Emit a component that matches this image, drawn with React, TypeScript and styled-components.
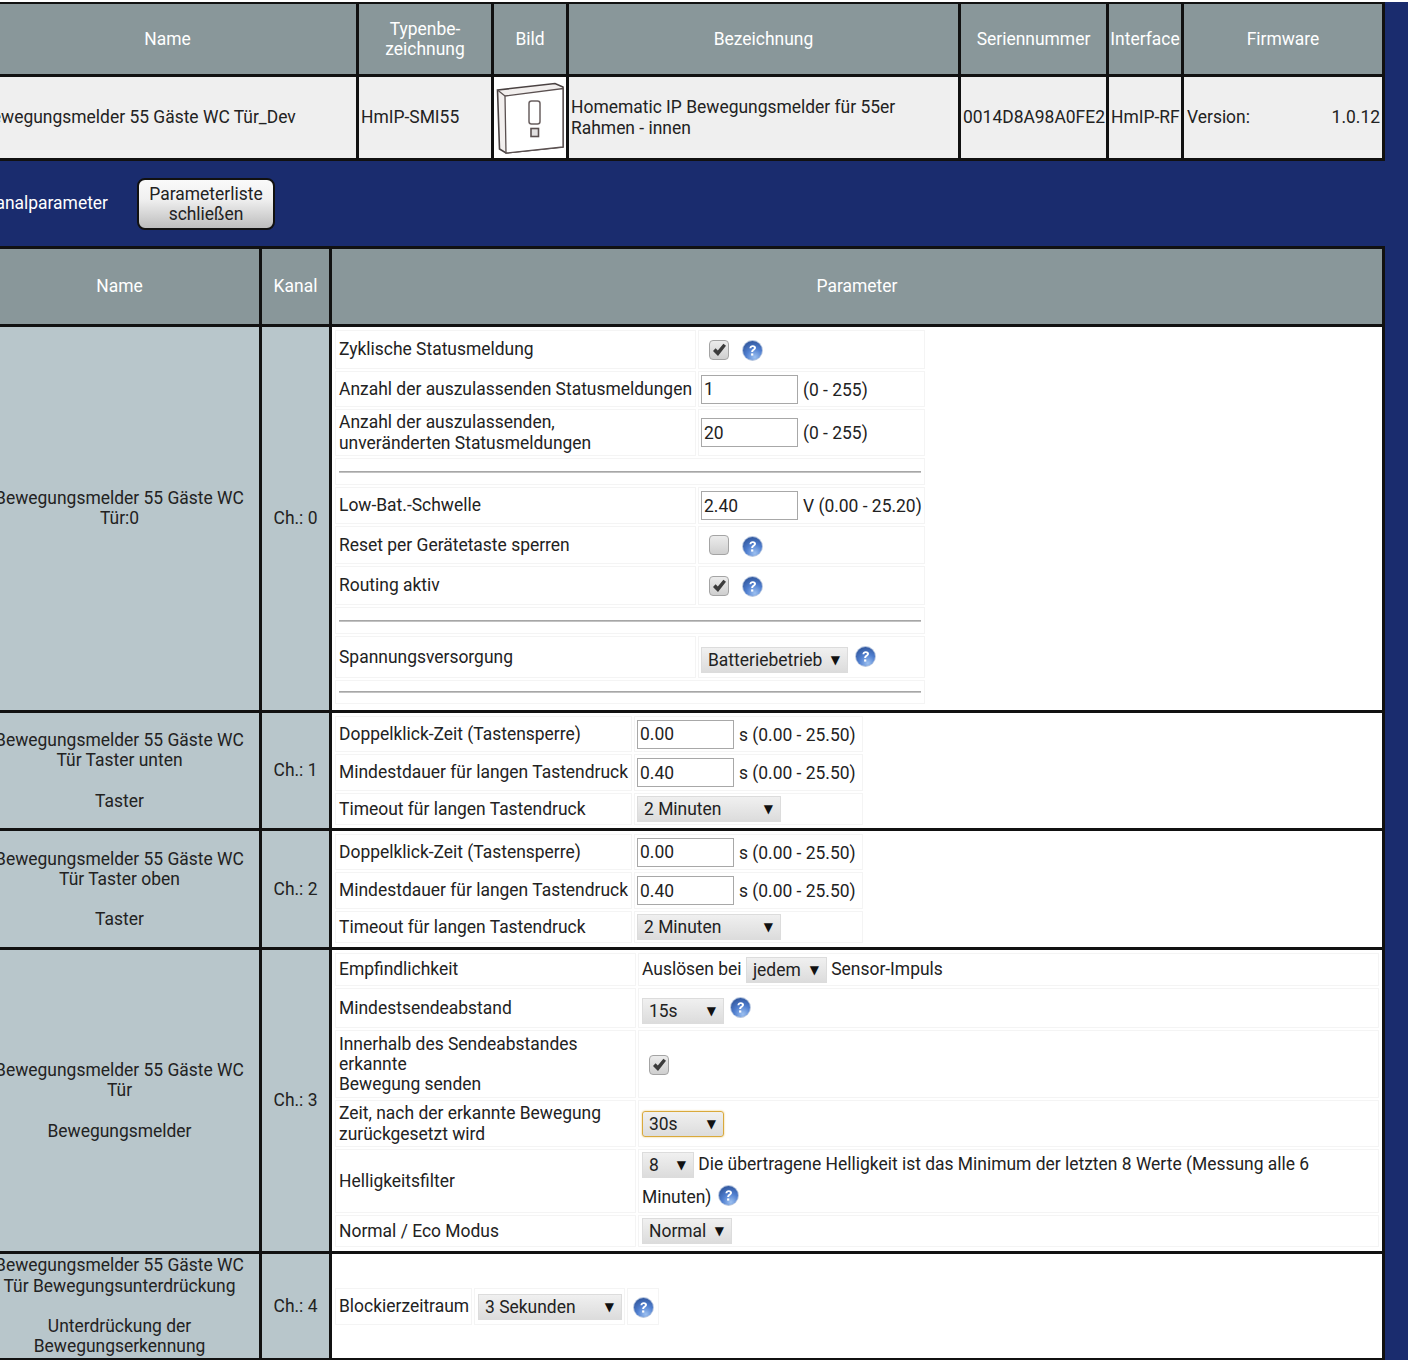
import React from 'react';
import styled, { createGlobalStyle } from 'styled-components';

const GlobalStyle = createGlobalStyle`
  html, body {
    margin: 0;
    padding: 0;
    background: #fff;
  }
  body {
    font-family: Roboto, "Liberation Sans", sans-serif;
    font-size: 17.45px;
    line-height: 20.25px;
    color: #222;
  }
`;

const Page = styled.div`
  width: 1408px;
  height: 1358px;
  margin-top: 2px;
  background-color: #1a2c6e;
  overflow: hidden;
`;

const Content = styled.div`
  width: 1409px;
  margin: -1px 0 0 -24px;
`;

const OuterTable = styled.table<{ $indent?: number }>`
  border-collapse: separate;
  border-spacing: 3px;
  background-color: #111;
  table-layout: fixed;
  width: ${p => 1409 - (p.$indent ?? 0)}px;
  margin-left: ${p => p.$indent ?? 0}px;
`;

const HeadCell = styled.th<{ $h: number }>`
  background-color: #89979a;
  color: #fff;
  font-weight: 400;
  text-align: center;
  padding: 0;
  height: ${p => p.$h}px;
`;

const DeviceCell = styled.td`
  background-color: #efefef;
  padding: 0 2px;
  height: 81px;
  white-space: nowrap;
`;

const ImageCell = styled.td`
  background-color: #fff;
  padding: 0;
  vertical-align: middle;
`;

const DescText = styled.div`
  white-space: normal;
`;

const VersionRow = styled.div`
  display: flex;
  justify-content: space-between;
  padding-left: 1px;
`;

const ActionBar = styled.div`
  display: flex;
  align-items: center;
  height: 85px;
  padding-left: 7px;
  gap: 29px;
`;

const ActionLabel = styled.span`
  color: #fff;
  width: 125px;
  text-align: right;
`;

const CloseButton = styled.button`
  width: 138px;
  height: 52px;
  padding: 0;
  border: 2px solid #111;
  border-radius: 8px;
  background: linear-gradient(#fafafa, #f0f0f0 40%, #bdbdbd);
  font: inherit;
  color: #222;
  line-height: 20px;
`;

const ChannelRow = styled.tr<{ $h: number }>`
  height: ${p => p.$h}px;
`;

const ChannelNameCell = styled.td`
  background-color: #b8c6cb;
  text-align: center;
  padding: 0;
  vertical-align: middle;
`;

const ParamCell = styled.td<{ $middle?: boolean }>`
  background-color: #fff;
  padding: 0;
  vertical-align: ${p => (p.$middle ? 'middle' : 'top')};
`;

const ParamTable = styled.table<{ $full?: boolean }>`
  border-collapse: separate;
  border-spacing: 2px;
  margin: 1px 0 0 1px;
  ${p => p.$full && 'width: 1048px; table-layout: fixed;'}
`;

const ParamRow = styled.tr<{ $h: number }>`
  height: ${p => p.$h}px;
`;

const Label = styled.td<{ $w: number }>`
  box-sizing: border-box;
  width: ${p => p.$w}px;
  min-width: ${p => p.$w}px;
  border: 1px solid #f4f4f4;
  padding: 0 0 0 3px;
  vertical-align: middle;
`;

const Value = styled.td<{ $w?: number }>`
  box-sizing: border-box;
  ${p => p.$w && `width: ${p.$w}px;`}
  border: 1px solid #f4f4f4;
  padding: 0 2px;
  vertical-align: middle;
  white-space: nowrap;
`;

const IndentValue = styled(Value)`
  padding-left: 3px;
`;

const WrapValue = styled(Value)`
  white-space: normal;
  padding: 0 3px;
`;

const WrapText = styled.div`
  line-height: 33px;
  margin: -2px 0;
`;

const DividerCell = styled.td`
  border: 1px solid #f4f4f4;
  padding: 0 3px;
  vertical-align: middle;
`;

const Divider = styled.hr`
  margin: 0;
  border: 0;
  height: 2px;
  background: linear-gradient(#999, #d0d0d0);
`;

const NumberInput = styled.input`
  box-sizing: border-box;
  width: 97px;
  height: 29px;
  padding: 0 2px;
  margin: 0 5px 0 0;
  border: 1px solid #a8a8a8;
  font: inherit;
  color: #222;
  background: #fff;
`;

const CheckWrap = styled.span`
  display: inline-flex;
  align-items: center;
  gap: 13px;
  margin-left: 8px;
  vertical-align: middle;
`;

const CheckBox = styled.span`
  display: inline-flex;
  align-items: center;
  justify-content: center;
  box-sizing: border-box;
  width: 20px;
  height: 20px;
  border: 1px solid #a4a4a4;
  border-radius: 4px;
  background: linear-gradient(#ececec, #cfcfcf);
`;

const Select = styled.span<{ $w: number; $focus?: boolean; $drop?: number }>`
  display: inline-flex;
  box-sizing: border-box;
  justify-content: space-between;
  align-items: center;
  position: relative;
  top: ${p => p.$drop ?? 0}px;
  width: ${p => p.$w}px;
  height: 26px;
  padding: 0 7px 0 6px;
  vertical-align: middle;
  border: 1px solid ${p => (p.$focus ? '#d9a93c' : '#dcdcdc')};
  border-radius: ${p => (p.$focus ? '3px' : '0')};
  box-shadow: ${p => (p.$focus ? '0 0 2px #e8c060' : 'none')};
  background: linear-gradient(#f0f0f0, #dcdcdc);
  color: #222;
  line-height: 20px;
`;

const Arrow = styled.span`
  font-family: "DejaVu Sans", sans-serif;
  font-size: 12px;
  color: #111;
`;

const HelpMark = styled.svg<{ $shift?: number; $left?: number }>`
  width: 21px;
  height: 21px;
  vertical-align: middle;
  margin-left: ${p => p.$left ?? 0}px;
  position: relative;
  top: ${p => p.$shift ?? 0}px;
`;

const HelpIcon: React.FC<{ shift?: number; left?: number }> = ({ shift, left }) => (
  <HelpMark viewBox="0 0 21 21" $shift={shift} $left={left}>
    <defs>
      <radialGradient id="helpBlue" cx="0.62" cy="0.85" r="0.9">
        <stop offset="0" stopColor="#9cc0f0" />
        <stop offset="0.5" stopColor="#4f7ecf" />
        <stop offset="1" stopColor="#2f5499" />
      </radialGradient>
    </defs>
    <circle cx="10.5" cy="10.5" r="10.4" fill="#b4c4de" />
    <circle cx="10.5" cy="10.5" r="9.5" fill="url(#helpBlue)" />
    <path d="M7.4 8.2c.2-2 1.6-3 3.4-3 1.9 0 3.2 1 3.2 2.6 0 1.3-.8 2-1.8 2.6-.8.5-1.1.9-1.1 1.7H9.2c0-1.4.5-2.1 1.5-2.8.8-.5 1.2-.9 1.2-1.4 0-.6-.5-1-1.2-1-.8 0-1.3.5-1.4 1.3z" fill="#fff" />
    <rect x="9.1" y="13.4" width="2.2" height="2.2" fill="#fff" />
  </HelpMark>
);

const CheckIcon = () => (
  <svg width="15" height="14" viewBox="0 0 15 14">
    <path d="M1 8 L3.6 5.2 L5.8 7.6 L11.4 0.8 L14 2.8 L6 13 Z" fill="#3c3c3c" />
  </svg>
);

const Check: React.FC<{ checked?: boolean; help?: boolean }> = ({ checked, help }) => (
  <CheckWrap>
    <CheckBox>{checked && <CheckIcon />}</CheckBox>
    {help && <HelpIcon shift={1} />}
  </CheckWrap>
);

const Dropdown: React.FC<{ w: number; value: string; focus?: boolean; drop?: number }> = ({ w, value, focus, drop }) => (
  <Select $w={w} $focus={focus} $drop={drop}>
    {value}
    <Arrow>▼</Arrow>
  </Select>
);

const DevicePicture = () => (
  <svg width="72" height="81" viewBox="0 0 72 81" style={{ display: 'block' }}>
    <path d="M3.5 13 L61 6.5 L69 10 L69 70 L12 76 L5.5 72 Z" fill="#f2efee" stroke="#4a4242" strokeWidth="1.6" />
    <path d="M11 19 L69 11.5 L69 70 L12 76 Z" fill="#fff" stroke="#5a5050" strokeWidth="1.3" />
    <path d="M3.5 13 L11 19" fill="none" stroke="#5a5050" strokeWidth="1.2" />
    <rect x="35" y="24" width="11" height="23" rx="2.5" fill="#fff" stroke="#6a6060" strokeWidth="1.5" />
    <rect x="37" y="51.5" width="7.5" height="8" fill="#e2e0e0" stroke="#5a5050" strokeWidth="1.6" />
  </svg>
);

const timing = (
  <>
    <ParamRow $h={36}>
      <Label $w={297}>Doppelklick-Zeit (Tastensperre)</Label>
      <Value $w={229}><NumberInput defaultValue="0.00" />s (0.00 - 25.50)</Value>
    </ParamRow>
    <ParamRow $h={37}>
      <Label $w={297}>Mindestdauer für langen Tastendruck</Label>
      <Value><NumberInput defaultValue="0.40" />s (0.00 - 25.50)</Value>
    </ParamRow>
    <ParamRow $h={32}>
      <Label $w={297}>Timeout für langen Tastendruck</Label>
      <Value><Dropdown w={144} value="2 Minuten" /></Value>
    </ParamRow>
  </>
);

const App: React.FC = () => (
  <>
    <GlobalStyle />
    <Page>
      <Content>
        <OuterTable>
          <colgroup>
            <col style={{ width: 377 }} />
            <col style={{ width: 132 }} />
            <col style={{ width: 72 }} />
            <col style={{ width: 389 }} />
            <col style={{ width: 145 }} />
            <col style={{ width: 72 }} />
            <col />
          </colgroup>
          <thead>
            <tr>
              <HeadCell $h={70}>Name</HeadCell>
              <HeadCell $h={70}>Typenbe-<br />zeichnung</HeadCell>
              <HeadCell $h={70}>Bild</HeadCell>
              <HeadCell $h={70}>Bezeichnung</HeadCell>
              <HeadCell $h={70}>Seriennummer</HeadCell>
              <HeadCell $h={70}>Interface</HeadCell>
              <HeadCell $h={70}>Firmware</HeadCell>
            </tr>
          </thead>
          <tbody>
            <tr>
              <DeviceCell>Bewegungsmelder 55 Gäste WC Tür_Dev</DeviceCell>
              <DeviceCell>HmIP-SMI55</DeviceCell>
              <ImageCell><DevicePicture /></ImageCell>
              <DeviceCell><DescText>Homematic IP Bewegungsmelder für 55er Rahmen - innen</DescText></DeviceCell>
              <DeviceCell>0014D8A98A0FE2</DeviceCell>
              <DeviceCell>HmIP-RF</DeviceCell>
              <DeviceCell><VersionRow><span>Version:</span><span>1.0.12</span></VersionRow></DeviceCell>
            </tr>
          </tbody>
        </OuterTable>

        <ActionBar>
          <ActionLabel>Kanalparameter</ActionLabel>
          <CloseButton>Parameterliste<br />schließen</CloseButton>
        </ActionBar>

        <OuterTable $indent={1}>
          <colgroup>
            <col style={{ width: 279 }} />
            <col style={{ width: 67 }} />
            <col />
          </colgroup>
          <thead>
            <tr>
              <HeadCell $h={75}>Name</HeadCell>
              <HeadCell $h={75}>Kanal</HeadCell>
              <HeadCell $h={75}>Parameter</HeadCell>
            </tr>
          </thead>
          <tbody>
            <ChannelRow $h={383}>
              <ChannelNameCell>Bewegungsmelder 55 Gäste WC<br />Tür:0<br /><br /></ChannelNameCell>
              <ChannelNameCell>Ch.: 0</ChannelNameCell>
              <ParamCell>
                <ParamTable>
                  <tbody>
                    <ParamRow $h={39}>
                      <Label $w={361}>Zyklische Statusmeldung</Label>
                      <Value $w={226}><Check checked help /></Value>
                    </ParamRow>
                    <ParamRow $h={36}>
                      <Label $w={361}>Anzahl der auszulassenden Statusmeldungen</Label>
                      <Value><NumberInput defaultValue="1" />(0 - 255)</Value>
                    </ParamRow>
                    <ParamRow $h={47}>
                      <Label $w={361}>Anzahl der auszulassenden,<br />unveränderten Statusmeldungen</Label>
                      <Value><NumberInput defaultValue="20" />(0 - 255)</Value>
                    </ParamRow>
                    <ParamRow $h={27}>
                      <DividerCell colSpan={2}><Divider /></DividerCell>
                    </ParamRow>
                    <ParamRow $h={37}>
                      <Label $w={361}>Low-Bat.-Schwelle</Label>
                      <Value><NumberInput defaultValue="2.40" />V (0.00 - 25.20)</Value>
                    </ParamRow>
                    <ParamRow $h={38}>
                      <Label $w={361}>Reset per Gerätetaste sperren</Label>
                      <Value><Check help /></Value>
                    </ParamRow>
                    <ParamRow $h={39}>
                      <Label $w={361}>Routing aktiv</Label>
                      <Value><Check checked help /></Value>
                    </ParamRow>
                    <ParamRow $h={27}>
                      <DividerCell colSpan={2}><Divider /></DividerCell>
                    </ParamRow>
                    <ParamRow $h={42}>
                      <Label $w={361}>Spannungsversorgung</Label>
                      <Value>
                        <Dropdown w={147} value="Batteriebetrieb" drop={3} />
                        <HelpIcon left={7} shift={-1} />
                      </Value>
                    </ParamRow>
                    <ParamRow $h={24}>
                      <DividerCell colSpan={2}><Divider /></DividerCell>
                    </ParamRow>
                  </tbody>
                </ParamTable>
              </ParamCell>
            </ChannelRow>
            <ChannelRow $h={115}>
              <ChannelNameCell>Bewegungsmelder 55 Gäste WC<br />Tür Taster unten<br /><br />Taster</ChannelNameCell>
              <ChannelNameCell>Ch.: 1</ChannelNameCell>
              <ParamCell><ParamTable><tbody>{timing}</tbody></ParamTable></ParamCell>
            </ChannelRow>
            <ChannelRow $h={116}>
              <ChannelNameCell>Bewegungsmelder 55 Gäste WC<br />Tür Taster oben<br /><br />Taster</ChannelNameCell>
              <ChannelNameCell>Ch.: 2</ChannelNameCell>
              <ParamCell><ParamTable><tbody>{timing}</tbody></ParamTable></ParamCell>
            </ChannelRow>
            <ChannelRow $h={301}>
              <ChannelNameCell>Bewegungsmelder 55 Gäste WC<br />Tür<br /><br />Bewegungsmelder</ChannelNameCell>
              <ChannelNameCell>Ch.: 3</ChannelNameCell>
              <ParamCell>
                <ParamTable $full>
                  <colgroup>
                    <col style={{ width: 301 }} />
                    <col />
                  </colgroup>
                  <tbody>
                    <ParamRow $h={33}>
                      <Label $w={301}>Empfindlichkeit</Label>
                      <IndentValue>Auslösen bei <Dropdown w={81} value="jedem" /> Sensor-Impuls</IndentValue>
                    </ParamRow>
                    <ParamRow $h={40}>
                      <Label $w={301}>Mindestsendeabstand</Label>
                      <IndentValue><Dropdown w={82} value="15s" drop={3} /><HelpIcon left={6} shift={-1} /></IndentValue>
                    </ParamRow>
                    <ParamRow $h={68}>
                      <Label $w={301}>Innerhalb des Sendeabstandes erkannte<br />Bewegung senden</Label>
                      <Value><Check checked /></Value>
                    </ParamRow>
                    <ParamRow $h={47}>
                      <Label $w={301}>Zeit, nach der erkannte Bewegung zurückgesetzt wird</Label>
                      <IndentValue><Dropdown w={82} value="30s" focus /></IndentValue>
                    </ParamRow>
                    <ParamRow $h={64}>
                      <Label $w={301}>Helligkeitsfilter</Label>
                      <WrapValue>
                        <WrapText>
                          <Dropdown w={52} value="8" /> Die übertragene Helligkeit ist das Minimum der letzten 8 Werte (Messung alle 6 Minuten)
                          <HelpIcon left={7} shift={-3} />
                        </WrapText>
                      </WrapValue>
                    </ParamRow>
                    <ParamRow $h={32}>
                      <Label $w={301}>Normal / Eco Modus</Label>
                      <IndentValue><Dropdown w={90} value="Normal" /></IndentValue>
                    </ParamRow>
                  </tbody>
                </ParamTable>
              </ParamCell>
            </ChannelRow>
            <ChannelRow $h={104}>
              <ChannelNameCell>Bewegungsmelder 55 Gäste WC<br />Tür Bewegungsunterdrückung<br /><br />Unterdrückung der<br />Bewegungserkennung</ChannelNameCell>
              <ChannelNameCell>Ch.: 4</ChannelNameCell>
              <ParamCell $middle>
                <ParamTable>
                  <tbody>
                    <ParamRow $h={37}>
                      <Label $w={137}>Blockierzeitraum</Label>
                      <IndentValue $w={150}><Dropdown w={144} value="3 Sekunden" /></IndentValue>
                      <Value $w={32}><HelpIcon left={3} shift={1} /></Value>
                    </ParamRow>
                  </tbody>
                </ParamTable>
              </ParamCell>
            </ChannelRow>
          </tbody>
        </OuterTable>
      </Content>
    </Page>
  </>
);

export default App;
